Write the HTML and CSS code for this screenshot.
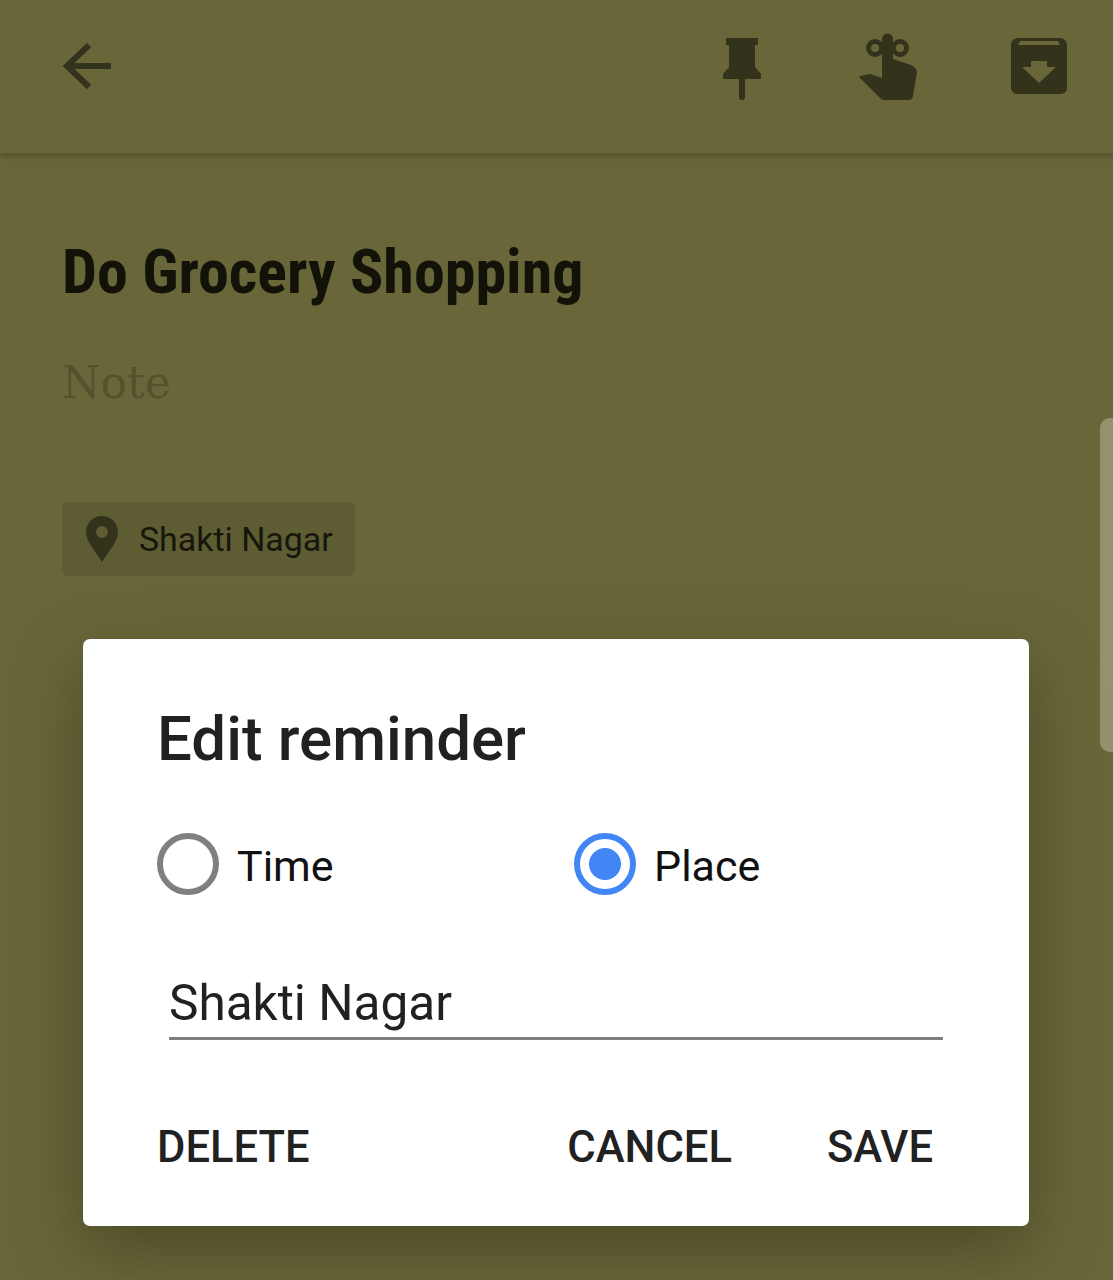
FILE: index.html
```html
<!DOCTYPE html>
<html lang="en">
<head>
<meta charset="utf-8">
<title>Edit reminder</title>
<link rel="stylesheet" href="styles.css">
</head>
<body>
<div class="page">
  <header class="topbar">
    <svg class="icon-back" width="50" height="46" viewBox="0 0 50 46"><path d="M49 23H5M27 2 5 23l22 21" fill="none" stroke="#33321a" stroke-width="6"/></svg>
    <svg class="icon-pin" width="38" height="62" viewBox="0 0 38 62"><path d="M3 0h32v7h-3v22l6 7v5H22v18a3 3 0 0 1-6 0V41H0v-5l6-7V7H3z" fill="#33321a"/></svg>
    <svg class="icon-hand" width="60" height="68" viewBox="0 0 60 68"><g fill="none" stroke="#33321a" stroke-width="5"><circle cx="17" cy="15" r="6.500"/><circle cx="42" cy="15" r="6.500"/></g><path d="M24 6a5.500 5.500 0 0 1 11 0v20l18 6c4 2 6 4 6 7l-4 24c0 2-2 4-4 4H26c-2 0-3-1-4-2L2 45c-1-1-1-1 0-2l10-2 12 4z" fill="#33321a"/></svg>
    <svg class="icon-archive" width="56" height="56" viewBox="0 0 56 56"><path fill-rule="evenodd" d="M7 0h42c4 0 7 3 7 7v43c0 3-3 6-6 6H6c-3 0-6-3-6-6V7c0-4 3-7 7-7zM9 3 7 7h42l-2-4zM20 23v6H11l17 16 17-16h-9v-6z" fill="#33321a"/></svg>
  </header>

  <main class="note">
    <h1 class="note-title">Do Grocery Shopping</h1>
    <p class="note-body">Note</p>
    <div class="chip">
      <svg width="32" height="46" viewBox="0 0 32 46"><path fill-rule="evenodd" d="M16 0c9 0 16 7 16 16 0 10-10 20-16 30C10 36 0 26 0 16 0 7 7 0 16 0zm0 10a6 6 0 1 0 0 12 6 6 0 0 0 0-12z" fill="#33321a"/></svg>
      <span class="chip-label">Shakti Nagar</span>
    </div>
  </main>

  <div class="scrollthumb"></div>

  <section class="dialog">
    <h2 class="dialog-title">Edit reminder</h2>
    <div class="radios">
      <div class="radio-item"><span class="radio"></span><span>Time</span></div>
      <div class="radio-item"><span class="radio radio-on"></span><span>Place</span></div>
    </div>
    <div class="field">Shakti Nagar</div>
    <div class="actions">
      <span class="action action-left">DELETE</span>
      <span class="action">CANCEL</span>
      <span class="action">SAVE</span>
    </div>
  </section>
</div>
</body>
</html>
```
FILE: styles.css
```css
* { box-sizing: border-box; }
html, body { margin: 0; padding: 0; }
.page {
  position: relative;
  width: 1113px;
  height: 1280px;
  overflow: hidden;
  background: #69673a;
  font-family: Roboto, "Noto Sans", sans-serif;
}
.topbar {
  position: relative;
  height: 153px;
  display: flex;
  align-items: flex-start;
  padding: 38px 46px 0 62px;
  box-shadow: 0 1px 0 #59582f, 0 3px 6px rgba(60, 60, 25, .55);
}
.icon-back { margin-top: 5px; margin-right: auto; }
.icon-hand { margin-left: 97px; margin-top: -5px; }
.icon-archive { margin-left: 93px; }
.note { padding: 0 62px; }
.note-title {
  margin: 86px 0 0;
  font-size: 62px;
  line-height: 66px;
  font-weight: 700;
  color: #121208;
  font-stretch: 75%;
  white-space: nowrap;
}
.note-body {
  margin: 52px 0 0;
  font-family: "DejaVu Serif", serif;
  font-size: 44px;
  line-height: 52px;
  color: #53522e;
}
.chip {
  display: inline-flex;
  align-items: center;
  gap: 21px;
  margin-top: 93px;
  height: 74px;
  width: 293px;
  padding-left: 24px;
  background: #5d5c33;
  border-radius: 6px;
}
.chip-label { font-size: 33.900px; padding-top: 1px; color: #16160b; white-space: nowrap; }
.scrollthumb {
  position: absolute;
  top: 418px;
  right: 0;
  width: 13px;
  height: 334px;
  background: #93926f;
  border-radius: 10px 0 0 10px;
}
.dialog {
  position: absolute;
  left: 83px;
  top: 639px;
  width: 946px;
  height: 587px;
  padding: 61px 86px 0 74px;
  background: #fff;
  border-radius: 7px;
  box-shadow: 0 24px 70px rgba(30, 30, 0, .4);
  color: #212121;
}
.dialog-title {
  margin: 0;
  font-size: 61.800px;
  line-height: 78px;
  font-weight: 500;
}
.radios {
  display: grid;
  grid-template-columns: 417px 1fr;
  margin-top: 53px;
}
.radio-item {
  display: flex;
  align-items: center;
  gap: 18px;
  font-size: 43px;
  line-height: 62px;
  color: #111;
}
.radio-item span:last-child { padding-top: 4px; }
.radio {
  position: relative;
  width: 62px;
  height: 62px;
  border: 6px solid #808080;
  border-radius: 50%;
}
.radio-on { border-color: #4285f4; }
.radio-on::after {
  content: "";
  position: absolute;
  left: 9px;
  top: 9px;
  width: 32px;
  height: 32px;
  border-radius: 50%;
  background: #4285f4;
}
.field {
  margin: 68px 0 0 12px;
  height: 75px;
  padding-top: 2px;
  border-bottom: 3px solid #808080;
  font-size: 49.500px;
  line-height: 72px;
  white-space: nowrap;
}
.actions {
  display: flex;
  gap: 95px;
  margin-top: 81px;
  padding-right: 10px;
}
.action {
  font-size: 43.500px;
  line-height: 54px;
  font-weight: 500;
}
.action-left { margin-right: auto; }
```
